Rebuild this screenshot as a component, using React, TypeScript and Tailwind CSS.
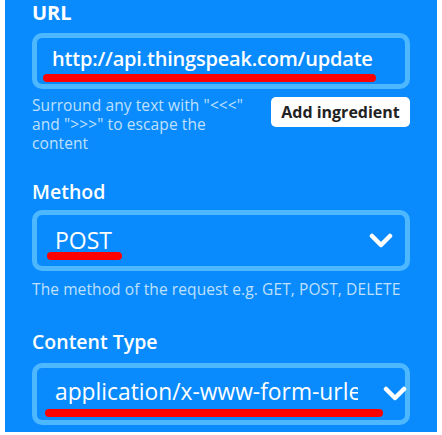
import React from "react";

const font = { fontFamily: "'Open Sans', 'Noto Sans', sans-serif" };

function Chevron() {
  return (
    <svg width="24" height="16" viewBox="0 0 24 16" className="shrink-0 self-center">
      <polyline points="3,3 12,12 21,3" fill="none" stroke="white" strokeWidth="4.5" strokeLinecap="round" strokeLinejoin="round" />
    </svg>
  );
}

function Underline({ w }: { w: string }) {
  return <div className={`h-[8px] rounded-full bg-[#ff0000] ${w}`} />;
}

export default function App() {
  return (
    <div className="w-[442px] h-[435px] bg-white pl-[5px] pr-[5px] pb-[3px]" style={font}>
      <div className="h-full bg-[#0a8bfd] px-[27px] text-white overflow-hidden">
        {/* URL */}
        <div className="text-[20px] font-bold leading-[26px]">URL</div>
        <div className="mt-[7px] h-[56px] rounded-[10px] border-[5px] border-[#4db7ff] pl-[6px] pt-[8px]">
          <div className="pl-[9px] text-[20px] font-semibold leading-[26px] whitespace-nowrap tracking-[-0.2px]">http://api.thingspeak.com/update</div>
          <Underline w="w-[333px] mt-[2px]" />
        </div>
        <div className="mt-[7px] flex justify-between items-start">
          <p className="w-[222px] text-[15.5px] leading-[19px] tracking-[0.1px] text-[#bfe0ff]">
            Surround any text with "&lt;&lt;&lt;" and "&gt;&gt;&gt;" to escape the content
          </p>
          <button className="mt-[1px] h-[30px] w-[139px] rounded-[5px] bg-white text-[16px] font-bold text-[#222]">
            Add ingredient
          </button>
        </div>

        {/* Method */}
        <div className="mt-[26px] text-[19.5px] font-semibold leading-[26px]">Method</div>
        <div className="mt-[5px] h-[61px] rounded-[10px] border-[5px] border-[#4db7ff] pl-[10px] pr-[12px] flex items-start justify-between">
          <div className="pt-[13px]">
            <div className="pl-[8px] text-[23px] font-medium leading-[24px]">POST</div>
            <Underline w="w-[75px] mt-[0px]" />
          </div>
          <Chevron />
        </div>
        <div className="mt-[9px] text-[15.5px] leading-[19px] tracking-[0.1px] text-[#bfe0ff] whitespace-nowrap">
          The method of the request e.g. GET, POST, DELETE
        </div>

        {/* Content Type */}
        <div className="mt-[30px] text-[19.5px] font-semibold leading-[26px]">Content Type</div>
        <div className="mt-[8px] h-[62px] rounded-[10px] border-[5px] border-[#4db7ff] pl-[8px] pr-[12px] flex items-start justify-between">
          <div className="pt-[12px]">
            <div className="ml-[10px] w-[303px] overflow-hidden text-[22.8px] font-medium leading-[24px] whitespace-nowrap">
              application/x-www-form-urlencoded
            </div>
            <Underline w="w-[338px] mt-[5px]" />
          </div>
          <Chevron />
        </div>
      </div>
    </div>
  );
}
